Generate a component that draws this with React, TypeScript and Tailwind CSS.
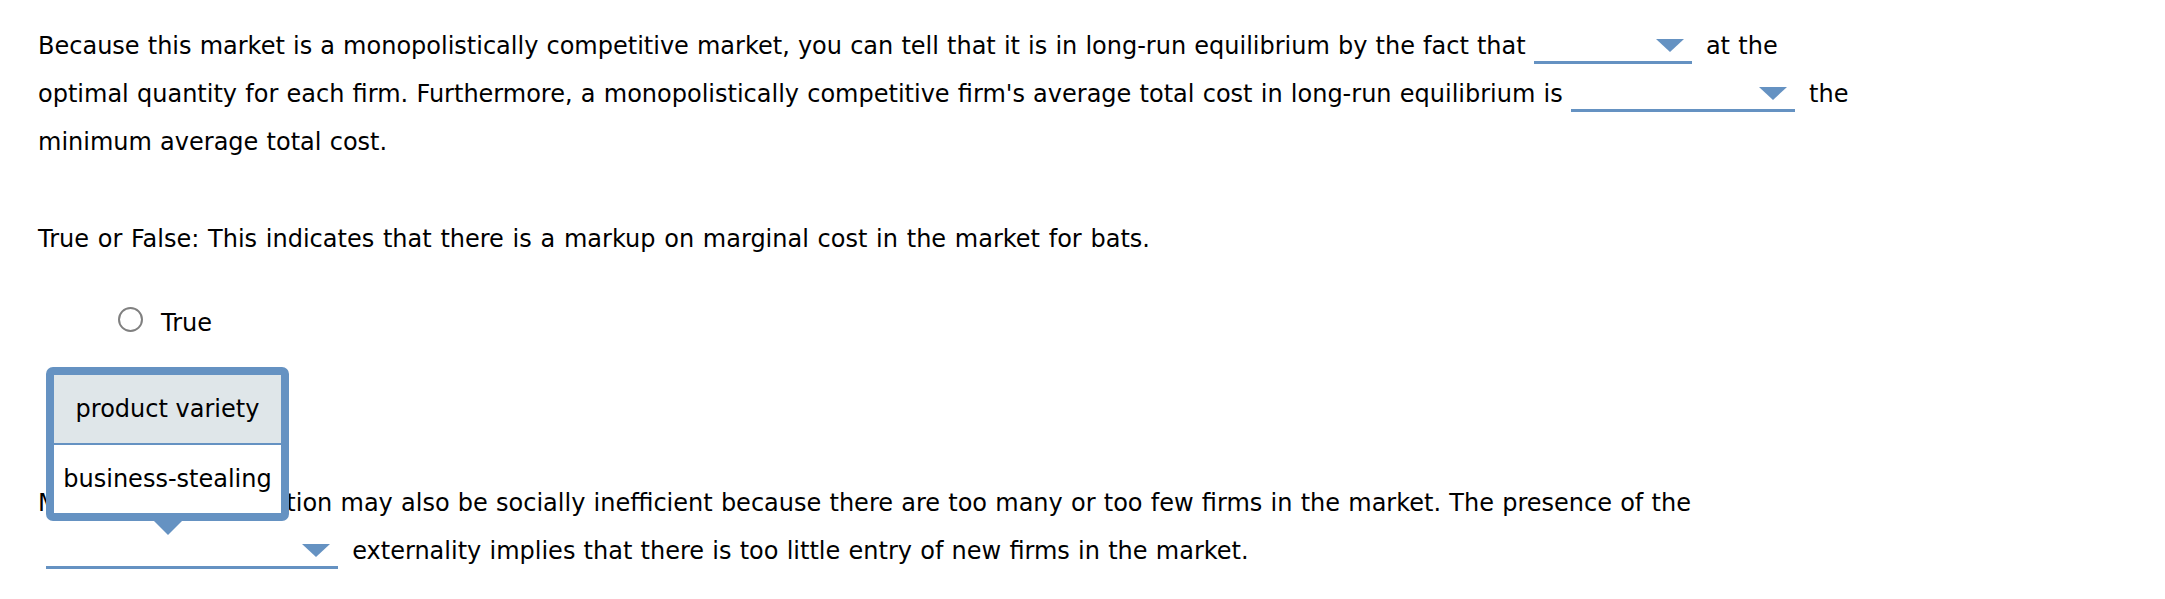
import React from "react";

function Arrow() {
  return (
    <svg
      className="absolute right-[8px] bottom-[9px]"
      width="28"
      height="13"
      viewBox="0 0 28 13"
    >
      <polygon points="0,0 28,0 14,13" fill="#6592c2" />
    </svg>
  );
}

function Dropdown({ width }: { width: number }) {
  return (
    <span
      className="relative inline-block align-baseline ml-[8px] mr-[6px] border-b-[3px] border-[#6592c2] leading-[30px]"
      style={{ width }}
    >
      {"\u00a0"}
      <Arrow />
    </span>
  );
}

export default function App() {
  return (
    <div className="relative w-full min-h-[599px] bg-white text-black font-['DejaVu_Sans',sans-serif] text-[24px] leading-[48px] pl-[38px] pt-[22px] whitespace-nowrap [word-spacing:0.6px]">
      <p>
        <span className="[word-spacing:0.5px]">
          Because this market is a monopolistically competitive market, you can tell that it is in long-run equilibrium by the fact that
        </span>
        <Dropdown width={158} /> at the
        <br />
        optimal quantity for each firm. Furthermore, a monopolistically competitive firm's average total cost in long-run equilibrium is
        <Dropdown width={224} /> the
        <br />
        minimum average total cost.
      </p>

      <p className="mt-[49px] [word-spacing:1.1px]">
        True or False: This indicates that there is a markup on marginal cost in the market for bats.
      </p>

      <div className="mt-[36px] pl-[80px] flex items-start h-[48px]">
        <span className="mt-[8px] w-[25px] h-[25px] rounded-full border-2 border-[#808080] bg-white shrink-0" />
        <span className="ml-[18px]">True</span>
      </div>

      <p className="mt-[132px]">
        <span className="tracking-[-0.35px] [word-spacing:0px]">Monopolistic competi</span>tion may also be socially inefficient because there are too many or too few firms in the market. The presence of the
        <br />
        <Dropdown width={292} /> externality implies that there is too little entry of new firms in the market.
      </p>

      <div className="absolute left-[46px] top-[367px] w-[243px] border-[8px] border-[#6592c2] rounded-[7px] bg-white [word-spacing:0px]">
        <div className="h-[68px] bg-[#dfe6e9] flex items-center justify-center">
          product variety
        </div>
        <div className="h-[2px] bg-[#6592c2]" />
        <div className="h-[68px] bg-white flex items-center justify-center">
          business-stealing
        </div>
      </div>
      <svg
        className="absolute left-[154px] top-[521px]"
        width="28"
        height="14"
        viewBox="0 0 28 14"
      >
        <polygon points="0,0 28,0 14,14" fill="#6592c2" />
      </svg>
    </div>
  );
}
